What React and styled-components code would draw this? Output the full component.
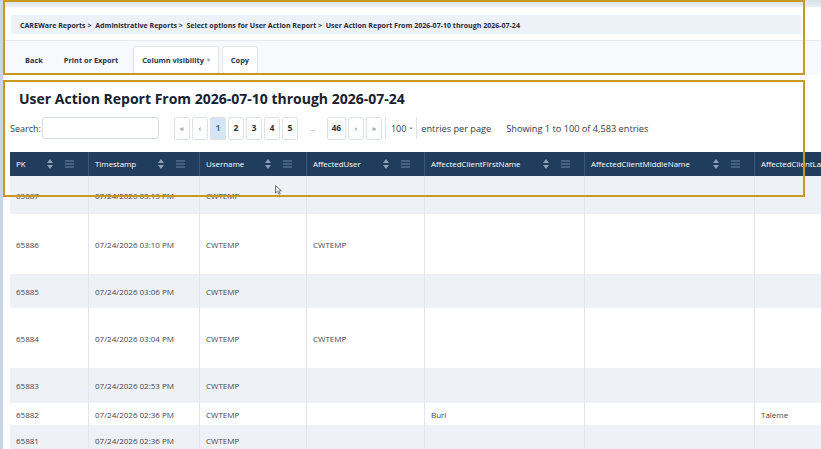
import React from 'react';
import styled, { createGlobalStyle } from 'styled-components';

const GlobalStyle = createGlobalStyle`
  body {
    margin: 0;
    background: #ffffff;
    font-family: "Open Sans", "Noto Sans", Arial, sans-serif;
    overflow: hidden;
  }
`;

const columns = [
  { name: 'PK', width: 79 },
  { name: 'Timestamp', width: 111 },
  { name: 'Username', width: 107 },
  { name: 'AffectedUser', width: 118 },
  { name: 'AffectedClientFirstName', width: 160 },
  { name: 'AffectedClientMiddleName', width: 170 },
  { name: 'AffectedClientLastName', width: 120 },
];

const rows = [
  { h: 38, cells: ['65887', '07/24/2026 03:13 PM', 'CWTEMP', '', '', '', ''] },
  { h: 60, cells: ['65886', '07/24/2026 03:10 PM', 'CWTEMP', 'CWTEMP', '', '', ''] },
  { h: 34, cells: ['65885', '07/24/2026 03:06 PM', 'CWTEMP', '', '', '', ''] },
  { h: 60, cells: ['65884', '07/24/2026 03:04 PM', 'CWTEMP', 'CWTEMP', '', '', ''] },
  { h: 35, cells: ['65883', '07/24/2026 02:53 PM', 'CWTEMP', '', '', '', ''] },
  { h: 22, cells: ['65882', '07/24/2026 02:36 PM', 'CWTEMP', '', 'Burl', '', 'Taleme'] },
  { h: 30, cells: ['65881', '07/24/2026 02:36 PM', 'CWTEMP', '', '', '', ''] },
];

function SortIcon() {
  return (
    <svg width="6" height="10" viewBox="0 0 6 10">
      <path d="M3 0 L6 4 L0 4 Z" fill="#8ea2bb" />
      <path d="M3 10 L6 6 L0 6 Z" fill="#8ea2bb" />
    </svg>
  );
}

function MenuIcon() {
  return (
    <svg width="9" height="8" viewBox="0 0 9 8">
      <path d="M0 1 H9 M0 4 H9 M0 7 H9" stroke="#6f86a3" strokeWidth="1" />
    </svg>
  );
}

function Cursor() {
  return (
    <svg width="7" height="10" viewBox="0 0 7 10">
      <path d="M0.5 0.5 L0.5 8 L2.5 6.2 L4 9.3 L5.2 8.8 L3.8 5.8 L6.3 5.8 Z" fill="#fff" stroke="#555" strokeWidth="0.8" />
    </svg>
  );
}

function App() {
  const pages = ['1', '2', '3', '4', '5'];
  return (
    <Page>
      <GlobalStyle />
      <TopStrip />
      <Breadcrumb>
        CAREWare Reports &gt;&nbsp; Administrative Reports &gt;&nbsp; Select options for User Action Report &gt;&nbsp; User Action Report From 2026-07-10 through 2026-07-24
      </Breadcrumb>
      <Toolbar>
        <ToolButton>Back</ToolButton>
        <ToolButton spaced>Print or Export</ToolButton>
        <ToolButton boxed>Column visibility <Caret>▾</Caret></ToolButton>
        <ToolButton boxed>Copy</ToolButton>
      </Toolbar>

      <Body>
        <Title>User Action Report From 2026-07-10 through 2026-07-24</Title>
        <Controls>
          <SearchLabel>Search:</SearchLabel>
          <SearchInput />
          <Pager>
            <PageBtn muted>«</PageBtn>
            <PageBtn muted>‹</PageBtn>
            {pages.map(p => (
              <PageBtn key={p} active={p === '1'}>{p}</PageBtn>
            ))}
            <Ellipsis>…</Ellipsis>
            <PageBtn wide>46</PageBtn>
            <PageBtn muted>›</PageBtn>
            <PageBtn muted>»</PageBtn>
          </Pager>
          <PerPage>100 <SmallCaret>⌄</SmallCaret></PerPage>
          <InfoText>entries per page</InfoText>
          <InfoText gap>Showing 1 to 100 of 4,583 entries</InfoText>
        </Controls>

        <Table>
          <HeadRow>
            {columns.map((c, i) => (
              <HeadCell key={c.name} style={{ width: c.width }}>
                <span>{c.name}</span>
                {i < columns.length - 1 && (
                  <Icons>
                    <SortIcon />
                    <MenuIcon />
                  </Icons>
                )}
              </HeadCell>
            ))}
          </HeadRow>
          {rows.map((r, ri) => (
            <Row key={ri} stripe={ri % 2 === 0} style={{ height: r.h }}>
              {r.cells.map((v, ci) => (
                <Cell key={ci} style={{ width: columns[ci].width }}>{v}</Cell>
              ))}
            </Row>
          ))}
        </Table>
      </Body>

      <Highlight top={0} height={75} />
      <Highlight top={80} height={117} />
      <CursorWrap><Cursor /></CursorWrap>
    </Page>
  );
}

const Page = styled.div`
  position: relative;
  width: 821px;
  height: 449px;
  overflow: hidden;
  background: #ffffff;
  border-left: 3px solid #c9d6e6;
  box-sizing: border-box;
`;

const TopStrip = styled.div`
  height: 7px;
  background: linear-gradient(#d6dfe9, #e9eef4);
`;

const Breadcrumb = styled.div`
  margin: 8px 20px 0 8px;
  height: 19px;
  background: #edf1f8;
  display: flex;
  align-items: center;
  padding-left: 9px;
  font-size: 7.05px;
  font-weight: 700;
  color: #1e2b3c;
  white-space: nowrap;
`;

const Toolbar = styled.div`
  margin-top: 6px;
  height: 34px;
  border-top: 1px solid #e6e9f0;
  background: #f8f9fd;
  display: flex;
  align-items: center;
  padding-left: 13px;
  gap: 3px;
`;

const ToolButton = styled.div`
  height: 26px;
  margin-top: 4px;
  display: flex;
  align-items: center;
  padding: 0 8px;
  margin-right: ${p => (p.spaced ? '3px' : '0')};
  font-size: 7.4px;
  font-weight: 700;
  color: #26344a;
  background: ${p => (p.boxed ? '#ffffff' : 'transparent')};
  border: 1px solid ${p => (p.boxed ? '#e0e4eb' : 'transparent')};
  border-radius: 3px;
  box-shadow: ${p => (p.boxed ? '0 1px 2px rgba(0,0,0,0.06)' : 'none')};
`;

const Caret = styled.span`
  margin-left: 3px;
  color: #9aa4b2;
  font-size: 6px;
`;

const Body = styled.div`
  padding: 0 0 0 7px;
`;

const Title = styled.h1`
  margin: 14px 0 0 9px;
  font-size: 14px;
  font-weight: 700;
  color: #17212f;
  line-height: 20px;
`;

const Controls = styled.div`
  margin-top: 7px;
  height: 24px;
  display: flex;
  align-items: center;
  color: #333c48;
`;

const SearchLabel = styled.span`
  font-size: 9px;
  color: #333c48;
`;

const SearchInput = styled.div`
  width: 115px;
  height: 20px;
  margin-left: 1px;
  border: 1px solid #d6dbe3;
  border-radius: 3px;
  background: #fff;
`;

const Pager = styled.div`
  display: flex;
  align-items: center;
  gap: 2px;
  margin-left: 15px;
`;

const PageBtn = styled.div`
  width: ${p => (p.wide ? '19px' : '16px')};
  height: 23px;
  box-sizing: border-box;
  display: flex;
  align-items: center;
  justify-content: center;
  border: 1px solid #dde2ea;
  border-radius: 2px;
  background: ${p => (p.active ? '#d6e5f5' : '#ffffff')};
  color: ${p => (p.muted ? '#8a929e' : p.active ? '#4a6a90' : '#2b3340')};
  font-size: ${p => (p.muted ? '7px' : '8.6px')};
  font-weight: 700;
`;

const Ellipsis = styled.span`
  width: 25px;
  text-align: center;
  color: #8a929e;
  font-size: 7px;
`;

const PerPage = styled.div`
  margin-left: 3px;
  height: 22px;
  display: flex;
  align-items: center;
  padding: 0 2px 0 5px;
  border-left: 1px solid #dde2ea;
  border-right: 1px solid #dde2ea;
  font-size: 9px;
  color: #333c48;
`;

const SmallCaret = styled.span`
  font-size: 7px;
  margin-left: 2px;
  margin-top: -3px;
`;

const InfoText = styled.span`
  margin-left: ${p => (p.gap ? '15px' : '4px')};
  font-size: 9.2px;
  color: #333c48;
  white-space: nowrap;
`;

const Table = styled.div`
  margin-top: 12px;
  width: 900px;
`;

const HeadRow = styled.div`
  display: flex;
  height: 24px;
  background: #213d5d;
`;

const HeadCell = styled.div`
  flex: none;
  box-sizing: border-box;
  display: flex;
  align-items: center;
  justify-content: space-between;
  padding: 0 14px 0 6px;
  border-right: 1px solid #3d5777;
  color: #ffffff;
  font-size: 7.9px;
  white-space: nowrap;
  overflow: hidden;
`;

const Icons = styled.div`
  display: flex;
  align-items: center;
  gap: 12px;
`;

const Row = styled.div`
  display: flex;
  background: ${p => (p.stripe ? '#eef1f6' : '#ffffff')};
`;

const Cell = styled.div`
  flex: none;
  box-sizing: border-box;
  display: flex;
  align-items: center;
  padding-left: 6px;
  border-right: 1px solid #e2e5ea;
  color: #424750;
  font-size: 8px;
  white-space: nowrap;
`;

const Highlight = styled.div`
  position: absolute;
  left: 0;
  top: ${p => p.top}px;
  width: 802px;
  height: ${p => p.height}px;
  box-sizing: border-box;
  border: 2.5px solid #c8981f;
  pointer-events: none;
`;

const CursorWrap = styled.div`
  position: absolute;
  left: 272px;
  top: 185px;
  line-height: 0;
`;

export default App;
